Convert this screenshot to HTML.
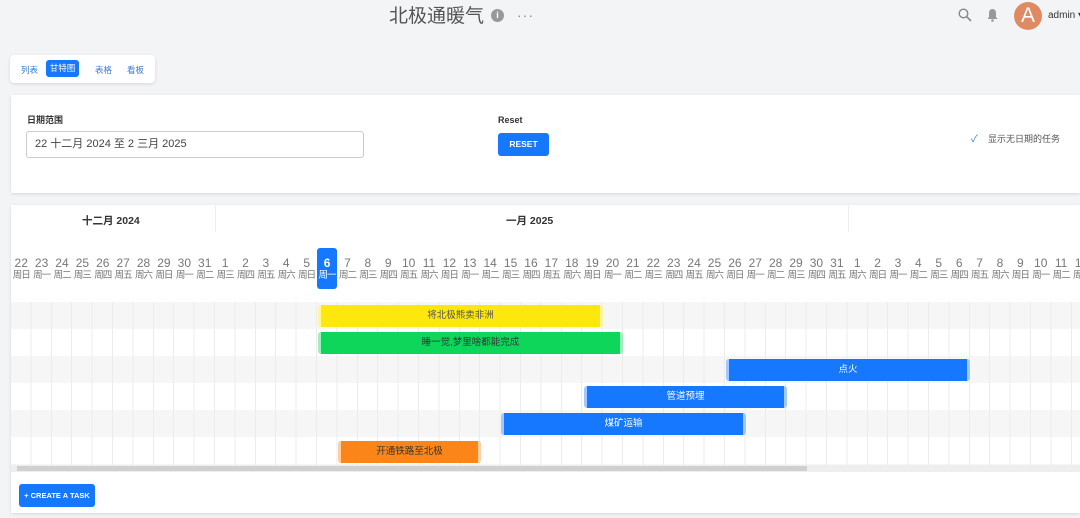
<!DOCTYPE html>
<html><head><meta charset="utf-8"><style>
*{box-sizing:border-box;margin:0;padding:0}
body{width:1080px;height:518px;overflow:hidden;background:#f3f4f6;font-family:"Liberation Sans","Noto Sans CJK SC",sans-serif;position:relative;color:#333}
.abs{position:absolute;white-space:nowrap}
.card{position:absolute;background:#fff;box-shadow:0 1px 3px rgba(0,0,0,.12)}
.days{position:absolute;left:11px;top:256px;display:flex}
.days div{width:20.4px;text-align:center;color:#777;flex:none}
.days b{display:block;font-weight:normal;font-size:12px;line-height:14px}
.days i{display:block;font-style:normal;font-size:9.5px;line-height:12px;white-space:nowrap;letter-spacing:-1px}
.days .t{background:#1677ff;color:#fff;border-radius:3px;height:41px;margin-top:-8px;padding-top:8px}
.days .t b{font-weight:bold}
.grid{position:absolute;left:11px;top:302px;width:1069px;height:163px;
background:repeating-linear-gradient(90deg,transparent 0,transparent 19.4px,#ececec 19.4px,#ececec 20.4px),repeating-linear-gradient(180deg,#f6f6f6 0,#f6f6f6 27px,#fff 27px,#fff 54px)}
.bar{position:absolute;height:22px;border-radius:3px;font-size:9.5px;text-align:center;line-height:22px;border-left:3px solid rgba(255,255,255,.6);border-right:3px solid rgba(255,255,255,.6)}
</style></head><body>
<div class="abs" style="left:389px;top:5px;font-size:19px;color:#555;line-height:24px">北极通暖气</div>
<div class="abs" style="left:491px;top:9px;width:13px;height:13px;border-radius:50%;background:#999;color:#fff;font-size:9px;text-align:center;line-height:13px;font-weight:bold">i</div>
<div class="abs" style="left:517px;top:6px;font-size:14px;color:#888;letter-spacing:1px;line-height:18px">···</div>
<svg class="abs" style="left:958px;top:8px" width="14" height="14" viewBox="0 0 14 14"><circle cx="5.5" cy="5.5" r="4.3" fill="none" stroke="#888" stroke-width="1.4"/><path d="M8.7 8.7L13 13" stroke="#888" stroke-width="1.6"/></svg>
<svg class="abs" style="left:986px;top:8px" width="13" height="14" viewBox="0 0 13 14"><path d="M6.5 1C4 1 3 3 3 5v4L1.5 11h10L10 9V5C10 3 9 1 6.5 1z" fill="#999"/><circle cx="6.5" cy="12.5" r="1.3" fill="#999"/></svg>
<div class="abs" style="left:1014px;top:2px;width:28px;height:28px;border-radius:50%;background:#e08a64;color:#fff;font-size:21px;text-align:center;line-height:28px">A</div>
<div class="abs" style="left:1048px;top:10px;font-size:10px;color:#333">admin ▾</div>

<div class="card" style="left:10px;top:55px;width:145px;height:28px;border-radius:4px"></div>
<div class="abs" style="left:21px;top:64px;font-size:8.5px;color:#3a7bd5">列表</div>
<div class="abs" style="left:46px;top:60px;width:33px;height:17px;background:#1677ff;border-radius:3px;color:#fff;font-size:8.5px;text-align:center;line-height:17px">甘特图</div>
<div class="abs" style="left:95px;top:64px;font-size:8.5px;color:#3a7bd5">表格</div>
<div class="abs" style="left:127px;top:64px;font-size:8.5px;color:#3a7bd5">看板</div>

<div class="card" style="left:11px;top:95px;width:1069px;height:98px"></div>
<div class="abs" style="left:27px;top:113px;font-size:9px;font-weight:bold;color:#333">日期范围</div>
<div class="abs" style="left:26px;top:131px;width:338px;height:27px;border:1px solid #ccc;border-radius:3px;font-size:11px;line-height:25px;padding-left:8px;color:#444">22 十二月 2024 至 2 三月 2025</div>
<div class="abs" style="left:498px;top:115px;font-size:9px;font-weight:bold;color:#333">Reset</div>
<div class="abs" style="left:498px;top:133px;width:51px;height:23px;background:#1677ff;border-radius:3px;color:#fff;font-size:8.5px;font-weight:bold;text-align:center;line-height:23px">RESET</div>
<div class="abs" style="left:971px;top:130px;font-size:10px;color:#3a7bd5">✓</div>
<div class="abs" style="left:988px;top:132px;font-size:9px;color:#555">显示无日期的任务</div>

<div class="card" style="left:11px;top:205px;width:1069px;height:308px"></div>
<div class="abs" style="left:215px;top:205px;width:1px;height:27px;background:#eee"></div>
<div class="abs" style="left:848px;top:205px;width:1px;height:27px;background:#eee"></div>
<div class="abs" style="left:82px;top:213px;font-size:10.5px;font-weight:bold;color:#333">十二月 2024</div>
<div class="abs" style="left:506px;top:213px;font-size:10.5px;font-weight:bold;color:#333">一月 2025</div>
<div class="days">
<div><b>22</b><i>周日</i></div><div><b>23</b><i>周一</i></div><div><b>24</b><i>周二</i></div><div><b>25</b><i>周三</i></div><div><b>26</b><i>周四</i></div><div><b>27</b><i>周五</i></div><div><b>28</b><i>周六</i></div><div><b>29</b><i>周日</i></div><div><b>30</b><i>周一</i></div><div><b>31</b><i>周二</i></div>
<div><b>1</b><i>周三</i></div><div><b>2</b><i>周四</i></div><div><b>3</b><i>周五</i></div><div><b>4</b><i>周六</i></div><div><b>5</b><i>周日</i></div><div class="t"><b>6</b><i>周一</i></div><div><b>7</b><i>周二</i></div><div><b>8</b><i>周三</i></div><div><b>9</b><i>周四</i></div><div><b>10</b><i>周五</i></div><div><b>11</b><i>周六</i></div><div><b>12</b><i>周日</i></div><div><b>13</b><i>周一</i></div><div><b>14</b><i>周二</i></div><div><b>15</b><i>周三</i></div><div><b>16</b><i>周四</i></div><div><b>17</b><i>周五</i></div><div><b>18</b><i>周六</i></div><div><b>19</b><i>周日</i></div><div><b>20</b><i>周一</i></div><div><b>21</b><i>周二</i></div><div><b>22</b><i>周三</i></div><div><b>23</b><i>周四</i></div><div><b>24</b><i>周五</i></div><div><b>25</b><i>周六</i></div><div><b>26</b><i>周日</i></div><div><b>27</b><i>周一</i></div><div><b>28</b><i>周二</i></div><div><b>29</b><i>周三</i></div><div><b>30</b><i>周四</i></div><div><b>31</b><i>周五</i></div>
<div><b>1</b><i>周六</i></div><div><b>2</b><i>周日</i></div><div><b>3</b><i>周一</i></div><div><b>4</b><i>周二</i></div><div><b>5</b><i>周三</i></div><div><b>6</b><i>周四</i></div><div><b>7</b><i>周五</i></div><div><b>8</b><i>周六</i></div><div><b>9</b><i>周日</i></div><div><b>10</b><i>周一</i></div><div><b>11</b><i>周二</i></div><div><b>12</b><i>周三</i></div>
</div>
<div class="grid"></div>
<div class="bar" style="left:318px;top:305px;width:285px;background:#fde70d;color:#555">将北极熊卖非洲</div>
<div class="bar" style="left:318px;top:332px;width:305px;background:#0dd65a;color:#333">睡一觉,梦里啥都能完成</div>
<div class="bar" style="left:726px;top:359px;width:244px;background:#1677ff;color:#fff">点火</div>
<div class="bar" style="left:584px;top:386px;width:203px;background:#1677ff;color:#fff">管道预埋</div>
<div class="bar" style="left:501px;top:413px;width:245px;background:#1677ff;color:#fff">煤矿运输</div>
<div class="bar" style="left:338px;top:441px;width:143px;background:#fb8518;color:#333">开通铁路至北极</div>
<div class="abs" style="left:11px;top:465px;width:1069px;height:7px;background:#eee"></div>
<div class="abs" style="left:17px;top:466px;width:790px;height:5px;background:#cfd0d2"></div>
<div class="abs" style="left:19px;top:484px;width:76px;height:23px;background:#1677ff;border-radius:3px;color:#fff;font-size:7.5px;font-weight:bold;text-align:center;line-height:23px">+ CREATE A TASK</div>
</body></html>
